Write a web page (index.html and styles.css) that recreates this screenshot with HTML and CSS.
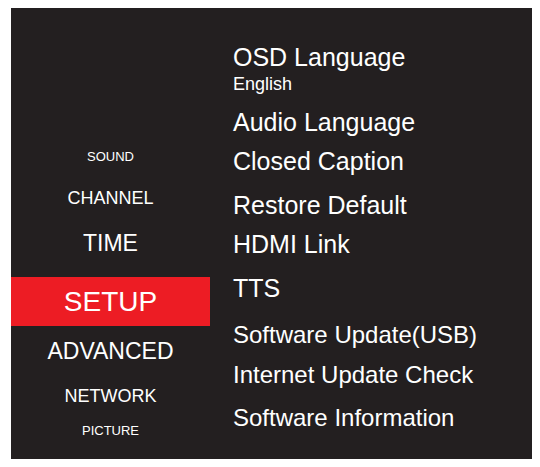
FILE: index.html
```html
<!DOCTYPE html>
<html lang="en">
<head>
<meta charset="utf-8">
<title>Setup Menu</title>
<link rel="stylesheet" href="styles.css">
</head>
<body>
  <div class="panel">
    <nav class="categories">
      <div class="cat cat-sm">SOUND</div>
      <div class="cat cat-md">CHANNEL</div>
      <div class="cat cat-lg">TIME</div>
      <div class="cat cat-active">SETUP</div>
      <div class="cat cat-lg cat-after-active">ADVANCED</div>
      <div class="cat cat-md">NETWORK</div>
      <div class="cat cat-sm cat-last">PICTURE</div>
    </nav>
    <ul class="options">
      <li class="opt opt-first">
        <div class="opt-title">OSD Language</div>
        <div class="opt-value">English</div>
      </li>
      <li class="opt"><div class="opt-title">Audio Language</div></li>
      <li class="opt"><div class="opt-title">Closed Caption</div></li>
      <li class="opt sp-wide"><div class="opt-title">Restore Default</div></li>
      <li class="opt"><div class="opt-title">HDMI Link</div></li>
      <li class="opt sp-wide"><div class="opt-title">TTS</div></li>
      <li class="opt opt-small sp-wider"><div class="opt-title">Software Update(USB)</div></li>
      <li class="opt opt-small"><div class="opt-title">Internet Update Check</div></li>
      <li class="opt opt-small sp-wide"><div class="opt-title">Software Information</div></li>
    </ul>
  </div>
</body>
</html>
```

FILE: styles.css
```css
html, body {
  margin: 0;
  padding: 0;
  background: #ffffff;
}

body {
  font-family: "Liberation Sans", Arial, Helvetica, sans-serif;
  color: #ffffff;
}

.panel {
  box-sizing: border-box;
  width: 521px;
  height: 451px;
  margin: 8px 0 0 11px;
  background: #231f20;
  display: flex;
  align-items: flex-start;
}

/* left category column */
.categories {
  width: 199px;
  flex: none;
  display: flex;
  flex-direction: column;
  padding-top: 139px;
  gap: 18.5px;
}

.cat {
  text-align: center;
  white-space: nowrap;
}

.cat-sm {
  font-size: 13px;
  line-height: 20px;
}

.cat-md {
  font-size: 18px;
  line-height: 24px;
}

.cat-lg {
  font-size: 23px;
  line-height: 30px;
}

.cat-active {
  font-size: 28px;
  line-height: 49px;
  height: 49px;
  background: #ed1c24;
}

.cat-after-active {
  margin-top: -8.5px;
}

.cat-last {
  margin-top: -5.5px;
}

/* right option list */
.options {
  list-style: none;
  margin: 0;
  padding: 36.3px 0 0 23px;
  display: flex;
  flex-direction: column;
  gap: 13.5px;
}

.opt-title {
  font-size: 25px;
  line-height: 26px;
  white-space: nowrap;
}

.opt-first {
  margin-bottom: 1.5px;
}

.opt-value {
  font-size: 18px;
  line-height: 20px;
  margin-top: 3.5px;
}

.opt-small .opt-title {
  font-size: 24px;
}

.sp-wide {
  margin-top: 4px;
}

.sp-wider {
  margin-top: 8px;
}
```
